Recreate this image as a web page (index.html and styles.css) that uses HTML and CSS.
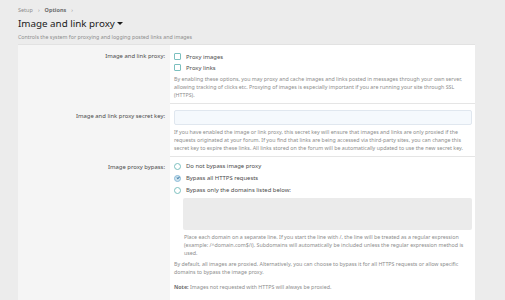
FILE: index.html
```html
<!DOCTYPE html>
<html lang="en">
<head>
    <meta charset="UTF-8">
    <title>Image and link proxy</title>
    <link rel="stylesheet" href="styles.css">
</head>
<body>
    <div class="page">
        <div class="breadcrumb">
            <span>Setup</span><span class="sep">&rsaquo;</span><strong>Options</strong><span class="sep">&rsaquo;</span>
        </div>
        <h1 class="title">Image and link proxy <span class="caret"></span></h1>
        <div class="description">Controls the system for proxying and logging posted links and images</div>

        <div class="block">
            <!-- proxy toggles -->
            <div class="row">
                <div class="label">Image and link proxy:</div>
                <div class="field">
                    <ul class="choices checks">
                        <li><span class="box"></span>Proxy images</li>
                        <li><span class="box"></span>Proxy links</li>
                    </ul>
                    <div class="explain">By enabling these options, you may proxy and cache images and links posted in messages through your own server, allowing tracking of clicks etc. Proxying of images is especially important if you are running your site through SSL (HTTPS).</div>
                </div>
            </div>

            <!-- secret key -->
            <div class="row">
                <div class="label label-input">Image and link proxy secret key:</div>
                <div class="field">
                    <div class="input"></div>
                    <div class="explain">If you have enabled the image or link proxy, this secret key will ensure that images and links are only proxied if the requests originated at your forum. If you find that links are being accessed via third-party sites, you can change this secret key to expire these links. All links stored on the forum will be automatically updated to use the new secret key.</div>
                </div>
            </div>

            <!-- bypass -->
            <div class="row">
                <div class="label">Image proxy bypass:</div>
                <div class="field">
                    <ul class="choices radios">
                        <li><span class="radio"></span>Do not bypass image proxy</li>
                        <li><span class="radio checked"></span>Bypass all HTTPS requests</li>
                        <li><span class="radio"></span>Bypass only the domains listed below:</li>
                    </ul>
                    <div class="dependent">
                        <div class="textarea"></div>
                        <div class="explain">Place each domain on a separate line. If you start the line with /, the line will be treated as a regular expression (example: /^domain.com$/i). Subdomains will automatically be included unless the regular expression method is used.</div>
                    </div>
                    <div class="explain">By default, all images are proxied. Alternatively, you can choose to bypass it for all HTTPS requests or allow specific domains to bypass the image proxy.</div>
                    <div class="explain note"><strong>Note:</strong> Images not requested with HTTPS will always be proxied.</div>
                </div>
            </div>
        </div>
    </div>
</body>
</html>
```

FILE: styles.css
```css
body {
    margin: 0;
    background: #ececec;
    font-family: "Noto Sans", "Open Sans", sans-serif;
    color: #4a4a4a;
}
.page {
    width: 457px;
    padding: 6px 0 0 18px;
}
.breadcrumb {
    font-size: 5.5px;
    line-height: 8px;
    color: #8c8c8c;
}
.breadcrumb strong {
    color: #6e6e6e;
}
.breadcrumb .sep {
    margin: 0 5px;
}
.title {
    margin: 3px 0 0;
    font-size: 9.8px;
    line-height: 14px;
    font-weight: 400;
    color: #1a1a1a;
}
.caret {
    display: inline-block;
    width: 0;
    height: 0;
    border-left: 3px solid transparent;
    border-right: 3px solid transparent;
    border-top: 3.5px solid #1a1a1a;
    vertical-align: 2px;
}
.description {
    margin-top: 2px;
    font-size: 5.3px;
    line-height: 8px;
    color: #8c8c8c;
}
.block {
    margin-top: 3px;
    background: #f5f5f5;
    border-top: 1px solid #e2e2e2;
    min-height: 300px;
}
.row {
    display: flex;
}
.label {
    width: 147px;
    padding: 6px 5px 0 0;
    text-align: right;
    font-size: 5.9px;
    line-height: 10px;
}
.label-input {
    padding-top: 8px;
}
.field {
    flex: 1;
    background: #fff;
    padding: 6px 3px 4px 4px;
}
.row + .row .field {
    border-top: 1px solid #e5e5e5;
    padding-top: 6px;
}
.row:last-child .field {
    padding-top: 3px;
    padding-bottom: 40px;
}
.choices {
    list-style: none;
    margin: 0;
    padding: 0;
    font-size: 5.9px;
}
.choices li {
    display: flex;
    align-items: center;
    height: 11px;
}
.radios li {
    height: 12px;
}
.box,
.radio {
    width: 5px;
    height: 5px;
    margin-right: 5px;
    border: 1px solid #7cc0bf;
    background: #fff;
}
.box {
    border-radius: 1px;
}
.radio {
    border-radius: 50%;
}
.radio.checked {
    background: #cfe4ef;
    border-color: #8cbcd8;
    position: relative;
}
.radio.checked::after {
    content: "";
    position: absolute;
    left: 1.5px;
    top: 0.6px;
    width: 1.2px;
    height: 2.4px;
    border-right: 0.8px solid #4f87b0;
    border-bottom: 0.8px solid #4f87b0;
    transform: rotate(45deg);
}
.explain {
    margin-top: 2px;
    font-size: 5.3px;
    line-height: 8px;
    color: #8c8c8c;
}
.input {
    height: 13px;
    background: #f5f9fd;
    border: 1px solid #e0e7ef;
    border-radius: 2px;
}
.input + .explain {
    margin-top: 3px;
}
.dependent {
    margin-left: 9px;
}
.textarea {
    height: 32px;
    margin-top: 2px;
    background: #ebebeb;
    border-radius: 2px;
}
.dependent .explain {
    margin-top: 3px;
    margin-left: 1px;
}
.dependent + .explain {
    margin-top: 3px;
}
.note {
    margin-top: 7px;
}
.note strong {
    color: #6e6e6e;
}
```
